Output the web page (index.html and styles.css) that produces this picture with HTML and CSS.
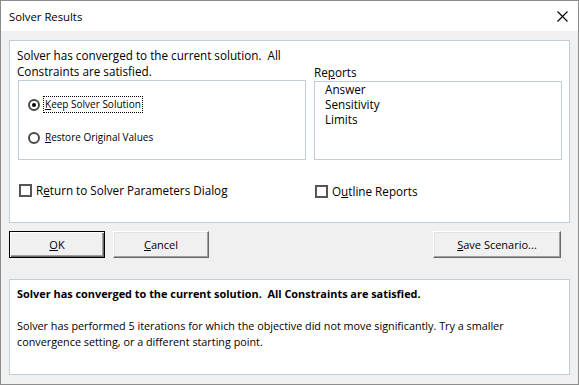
FILE: index.html
```html
<!DOCTYPE html>
<html>
<head>
<meta charset="utf-8">
<title>Solver Results</title>
<link rel="stylesheet" href="styles.css">
</head>
<body>
<div class="window">
  <div class="titlebar">
    <span class="title">Solver Results</span>
    <svg class="close" width="11" height="11" viewBox="0 0 11 11"><path d="M0.5 0.5 L10.5 10.5 M10.5 0.5 L0.5 10.5" stroke="#000" stroke-width="1.1" fill="none"/></svg>
  </div>
  <div class="body">
    <section class="panel main">
      <div class="top-row">
        <div class="left-col">
          <p class="status">Solver has converged to the current solution.&nbsp; All<br>Constraints are satisfied.</p>
          <div class="groupbox">
            <div class="option"><span class="radio checked"></span><span class="opt-label focus"><u>K</u>eep Solver Solution</span></div>
            <div class="option"><span class="radio"></span><span class="opt-label"><u>R</u>estore Original Values</span></div>
          </div>
        </div>
        <div class="right-col">
          <div class="list-label">Re<u>p</u>orts</div>
          <ul class="listbox">
            <li>Answer</li>
            <li>Sensitivity</li>
            <li>Limits</li>
          </ul>
        </div>
      </div>
      <div class="check-row">
        <div class="check return"><span class="box"></span><span>R<u>e</u>turn to Solver Parameters Dialog</span></div>
        <div class="check outline"><span class="box"></span><span>O<u>u</u>tline Reports</span></div>
      </div>
    </section>
    <div class="buttons">
      <div class="btn default"><span><u>O</u>K</span></div>
      <div class="btn cancel"><span><u>C</u>ancel</span></div>
      <div class="btn save"><span><u>S</u>ave Scenario...</span></div>
    </div>
    <section class="panel message">
      <p class="msg-title">Solver has converged to the current solution.&nbsp; All Constraints are satisfied.</p>
      <p class="msg-body">Solver has performed 5 iterations for which the objective did not move significantly. Try a smaller convergence setting, or a different starting point.</p>
    </section>
  </div>
</div>
</body>
</html>
```
FILE: styles.css
```css
html, body {
  margin: 0;
  padding: 0;
}
body {
  font-family: "Open Sans", "Noto Sans", sans-serif;
  font-size: 11.7px;
  color: #000;
  background: #f0f0f0;
}
.window {
  width: 579px;
  height: 385px;
  box-sizing: border-box;
  border: 1px solid #8c8c8c;
  background: #f0f0f0;
  display: flex;
  flex-direction: column;
}
.titlebar {
  height: 30px;
  background: #fff;
  display: flex;
  align-items: center;
  flex-shrink: 0;
}
.title {
  padding-left: 8px;
  font-size: 11.3px;
  line-height: 16px;
  margin-top: 1px;
}
.close {
  margin-left: auto;
  margin-right: 10px;
  margin-top: 1px;
}
.body {
  padding: 9px 8px 0 8px;
  display: flex;
  flex-direction: column;
}
.panel {
  background: #fff;
  border: 1px solid #bfcedc;
  box-sizing: border-box;
  padding: 6px 7px;
}
.panel.main {
  height: 183px;
}
.top-row {
  display: flex;
}
.left-col {
  width: 289px;
}
.status {
  margin: 0;
  line-height: 16px;
  white-space: nowrap;
}
.groupbox {
  margin: 1px 0 0 1px;
  width: 288px;
  height: 80px;
  box-sizing: border-box;
  border: 1px solid #bfcedc;
  padding: 15px 0 0 9px;
  display: flex;
  flex-direction: column;
  gap: 16px;
}
.option {
  display: flex;
  align-items: center;
  height: 17px;
}
.radio {
  width: 12px;
  height: 12px;
  box-sizing: border-box;
  border: 2px solid #4a4a4a;
  border-radius: 50%;
  background: #fff;
  margin-right: 3px;
  display: flex;
  align-items: center;
  justify-content: center;
  flex-shrink: 0;
}
.radio.checked::after {
  content: "";
  width: 4px;
  height: 4px;
  border-radius: 50%;
  background: #000;
}
.opt-label {
  border: 1px dotted transparent;
  padding: 0 1px;
  line-height: 15px;
  font-size: 10px;
}
.opt-label.focus {
  border-color: #000;
}
.right-col {
  margin-left: 8px;
  padding-top: 17px;
  width: 248px;
}
.list-label {
  line-height: 16px;
}
.listbox {
  list-style: none;
  margin: 1px 0 0 0;
  height: 79px;
  box-sizing: border-box;
  border: 1px solid #bfcedc;
  padding: 0 0 0 10px;
}
.listbox li {
  line-height: 15px;
}
.check-row {
  display: flex;
  margin-top: 21px;
}
.check {
  display: flex;
  align-items: center;
  line-height: 16px;
}
.check .box {
  width: 13px;
  height: 13px;
  box-sizing: border-box;
  border: 2px solid #555;
  background: #fff;
  margin-right: 4px;
  flex-shrink: 0;
}
.check.return {
  margin-left: 2px;
  width: 296px;
}
.check.outline {
  margin-top: 2px;
}
.buttons {
  display: flex;
  margin-top: 8px;
  height: 27px;
}
.btn {
  height: 27px;
  box-sizing: border-box;
  background: #f0f0f0;
  border: 1px solid;
  border-color: #fff #696969 #696969 #fff;
  box-shadow: inset -1px -1px 0 #a0a0a0, inset 1px 1px 0 #e3e3e3;
  display: flex;
  align-items: center;
  justify-content: center;
  line-height: 16px;
  font-size: 11px;
}
.btn.default {
  width: 96px;
  border-color: #000;
  box-shadow: inset 1px 1px 0 #fff, inset -1px -1px 0 #696969, inset -2px -2px 0 #a0a0a0;
}
.btn.cancel {
  width: 96px;
  margin-left: 8px;
}
.btn.save {
  width: 128px;
  margin-left: auto;
  margin-right: 9px;
}
.panel.message {
  margin-top: 21px;
  height: 96px;
}
.msg-title {
  margin: 0;
  line-height: 16px;
  font-weight: bold;
  font-size: 10.9px;
}
.msg-body {
  margin: 16px 0 0 0;
  line-height: 16px;
  font-size: 10.8px;
  width: 540px;
}
```
